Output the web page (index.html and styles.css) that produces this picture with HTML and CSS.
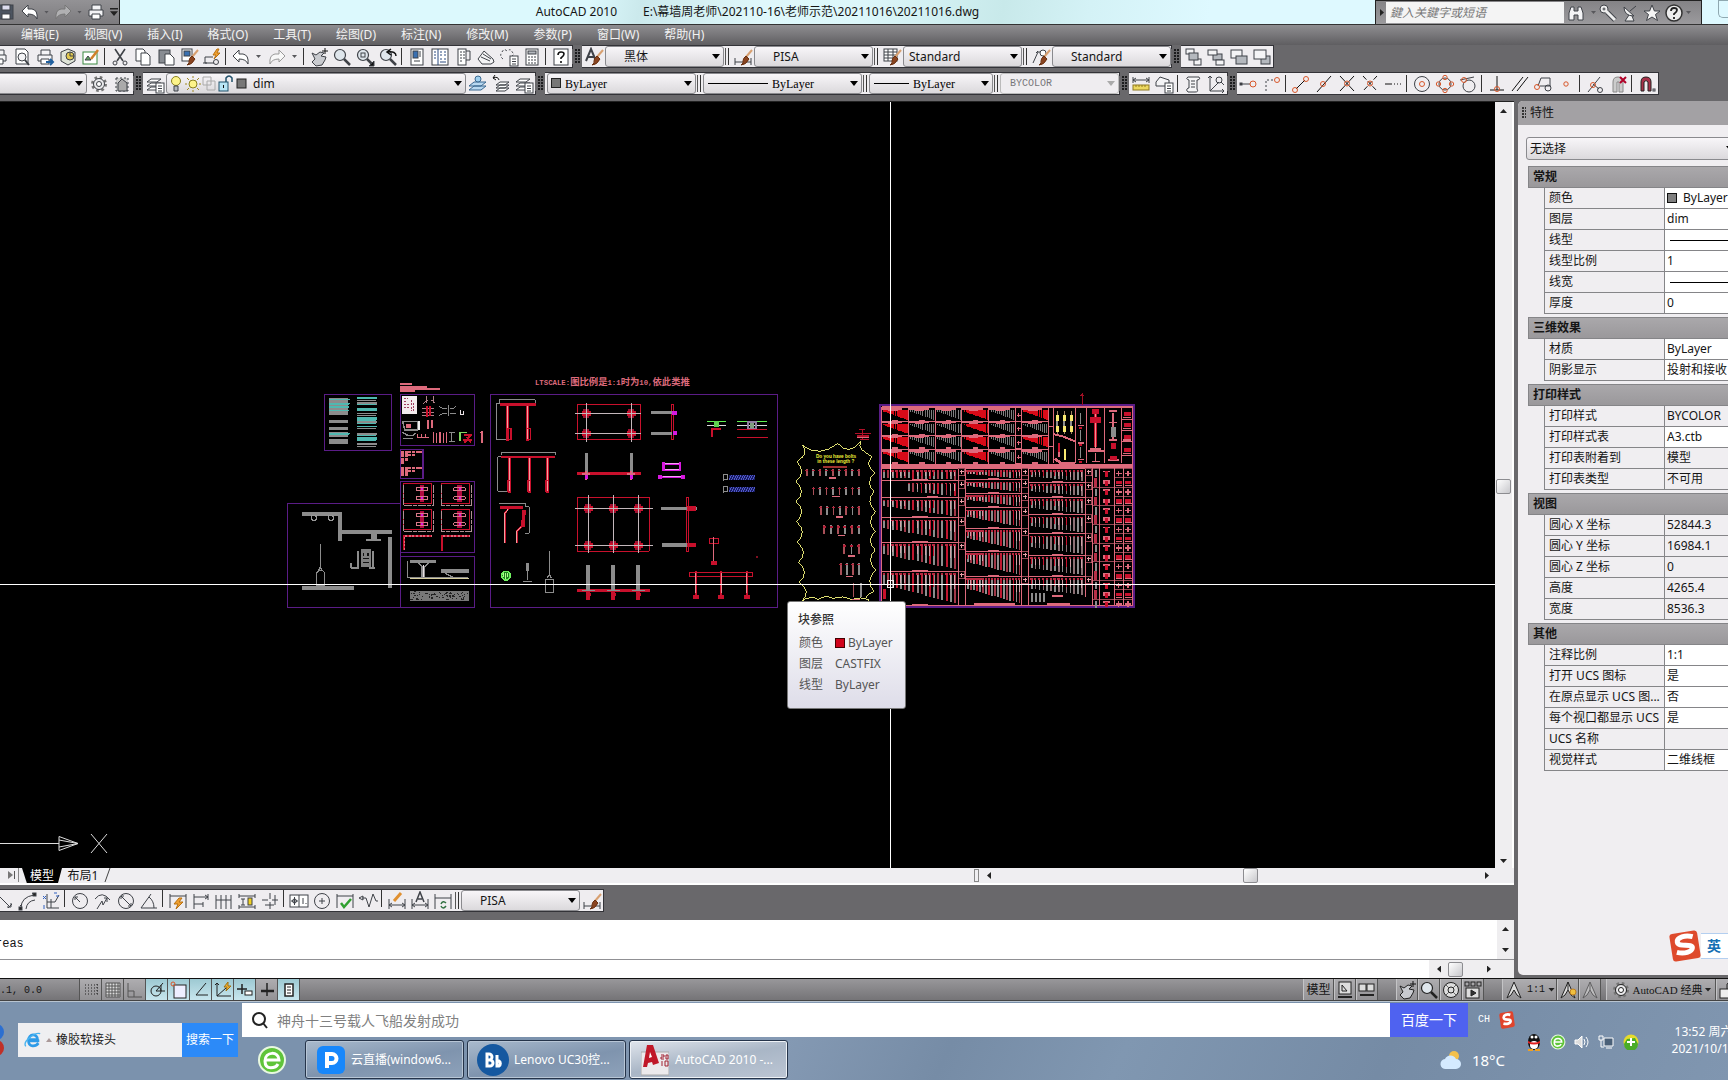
FILE: index.html
```html
<!DOCTYPE html>
<html lang="zh-CN">
<head>
<meta charset="utf-8">
<title>AutoCAD 2010</title>
<link rel="stylesheet" href="styles.css">
</head>
<body>
<header>
  <div class="titlebar">
    <div class="quick">
      <button data-icon="save" aria-label="保存"></button><button data-icon="undoW" aria-label="放弃"></button><i class="tri dim"></i><button data-icon="redoW" aria-label="重做"></button><i class="tri dim"></i><button data-icon="printW" aria-label="打印"></button><i class="tri bar-tri"></i>
    </div>
    <h1><span>AutoCAD 2010</span><span>E:\幕墙周老师\202110-16\老师示范\20211016\20211016.dwg</span></h1>
    <div class="infocenter">
      <i class="tri right"></i><input type="text" placeholder="鍵入关鍵字或短语" aria-label="搜索">
      <button class="find" data-icon="binoc" aria-label="搜索"></button><i class="tri dim"></i><button data-icon="key" aria-label="速博"></button><button data-icon="dish" aria-label="通讯中心"></button><button data-icon="star" aria-label="收藏夹"></button><button data-icon="helpW" aria-label="帮助"></button><i class="tri dim"></i>
    </div>
    <button class="winbtn" aria-label="最小化"></button>
  </div>
  <nav class="menu">
    <button>编辑(E)</button><button>视图(V)</button><button>插入(I)</button><button>格式(O)</button><button>工具(T)</button><button>绘图(D)</button><button>标注(N)</button><button>修改(M)</button><button>参数(P)</button><button>窗口(W)</button><button>帮助(H)</button>
  </nav>
  <div class="bar">
    <div class="panel bleed" data-tools="print preview publish dwf edit | cut copy paste match block | undo v redo v | pan zoom zoomwin zoomprev | props center palette sheet markup calc | help"></div>
    <i class="grip"></i>
    <div class="panel">
      <button data-icon="textstyle" aria-label="文字样式"></button><select class="w119 in16" aria-label="文字样式"><option>黑体</option></select><i class="sep two"></i>
      <button data-icon="dimstyle" aria-label="标注样式"></button><select class="w119 in16" aria-label="标注样式"><option>PISA</option></select><i class="sep two"></i>
      <button data-icon="tablestyle" aria-label="表格样式"></button><select class="w119" aria-label="表格样式"><option>Standard</option></select><i class="sep two"></i>
      <button data-icon="leader" aria-label="多重引线样式"></button><select class="w119 in16" aria-label="多重引线样式"><option>Standard</option></select>
    </div>
    <i class="grip"></i>
    <div class="panel" data-tools="order1 order2 order3 order4"></div>
  </div>
  <div class="bar">
    <div class="panel bleedfar"><select class="w171" aria-label="工作空间"><option>AutoCAD 经典</option></select><button data-icon="gear" aria-label="工作空间设置"></button><button data-icon="wsSave" aria-label="我的工作空间"></button></div>
    <i class="grip"></i>
    <div class="panel"><button data-icon="layers" aria-label="图层特性"></button>
      <div class="combo"><select class="w300 in84" aria-label="图层"><option>dim</option></select><span class="over" data-tools="bulb sun vp lock swatch"></span></div>
      <span class="group" data-tools="laycur layprev laystate"></span></div>
    <i class="grip"></i>
    <div class="panel pad serif">
      <div class="combo"><select class="w149 in16" aria-label="颜色"><option>ByLayer</option></select><span class="chip"></span></div><i class="sep two"></i>
      <div class="combo"><select class="w159 in68" aria-label="线型"><option>ByLayer</option></select><span class="rule w60"></span></div><i class="sep two"></i>
      <div class="combo"><select class="w124 in40" aria-label="线宽"><option>ByLayer</option></select><span class="rule w32"></span></div><i class="sep two"></i>
      <select class="w119 mono" aria-label="打印样式" disabled><option>BYCOLOR</option></select>
    </div>
    <i class="grip"></i>
    <div class="panel" data-tools="dist area | list locate"></div>
    <i class="grip"></i>
    <div class="panel" data-tools="otrack ofrom | oend omid oint oapp oext | ocen oqua otan | operp opar oins onode | onear onone | oset"></div>
  </div>
</header>
<main>
  <section class="work">
    <div class="view">
      <div class="canvas">
        <svg id="drawing" role="img" aria-label="图纸"></svg>
        <div class="tip">
          <strong>块参照</strong>
          <dl><dt>颜色</dt><dd><i></i>ByLayer</dd><dt>图层</dt><dd>CASTFIX</dd><dt>线型</dt><dd>ByLayer</dd></dl>
        </div>
      </div>
      <div class="vscroll"><i class="tri up"></i><i class="thumb"></i><i class="tri"></i></div>
    </div>
    <div class="tabs">
      <button class="last" aria-label="最后一个布局"><svg width="12" height="12"><path d="M3 2l5 4-5 4z" fill="#777"/><path d="M9.500 2v8" stroke="#555"/></svg></button>
      <button class="tab on">模型</button><button class="tab">布局1</button>
      <svg class="slash" width="8" height="14"><path d="M1 14L6 0" stroke="#444"/></svg>
      <div class="hscroll"><i class="split"></i><i class="tri left"></i><i class="thumb"></i><i class="tri right"></i></div>
    </div>
    <div class="dimrow">
      <div class="panel">
        <span class="group first" data-tools="daligned darc dord | drad djog ddia dang | dquick dbase dcont dspace dbreak | dtol dcenter dinsp djogl | dedit dtedit dupd"></span><i class="sep two"></i><select class="w119 in16" aria-label="标注样式控制"><option>PISA</option></select><button data-icon="dimstyle" aria-label="标注样式"></button>
      </div>
    </div>
    <div class="command">
      <div class="log"><p>reas</p><div class="mini"><i class="tri up"></i><i class="tri"></i></div></div>
      <div class="prompt"><input type="text" aria-label="命令"><div class="minih"><i class="tri left"></i><i class="thumb"></i><i class="tri right"></i></div></div>
    </div>
  </section>
  <aside class="props">
    <h2 class="ptitle"><i></i>特性</h2>
    <select class="pick" aria-label="对象"><option>无选择</option></select>
    <h3>常规</h3>
    <table><tr><th>颜色</th><td><i class="sq"></i>ByLayer</td></tr><tr><th>图层</th><td>dim</td></tr><tr><th>线型</th><td><i class="ln"></i></td></tr><tr><th>线型比例</th><td>1</td></tr><tr><th>线宽</th><td><i class="ln"></i></td></tr><tr><th>厚度</th><td>0</td></tr></table>
    <h3>三维效果</h3>
    <table><tr><th>材质</th><td>ByLayer</td></tr><tr><th>阴影显示</th><td>投射和接收</td></tr></table>
    <h3>打印样式</h3>
    <table><tr><th>打印样式</th><td class="ro">BYCOLOR</td></tr><tr><th>打印样式表</th><td>A3.ctb</td></tr><tr><th>打印表附着到</th><td class="ro">模型</td></tr><tr><th>打印表类型</th><td class="ro">不可用</td></tr></table>
    <h3>视图</h3>
    <table class="ro"><tr><th>圆心 X 坐标</th><td>52844.3</td></tr><tr><th>圆心 Y 坐标</th><td>16984.1</td></tr><tr><th>圆心 Z 坐标</th><td>0</td></tr><tr><th>高度</th><td>4265.4</td></tr><tr><th>宽度</th><td>8536.3</td></tr></table>
    <h3>其他</h3>
    <table><tr><th>注释比例</th><td>1:1</td></tr><tr><th>打开 UCS 图标</th><td>是</td></tr><tr><th>在原点显示 UCS 图...</th><td>否</td></tr><tr><th>每个视口都显示 UCS</th><td>是</td></tr><tr><th>UCS 名称</th><td class="ro"></td></tr><tr><th>视觉样式</th><td>二维线框</td></tr></table>
    <div class="ime"><svg width="32" height="32" viewBox="0 0 32 32"><g transform="rotate(-9 16 16)"><rect x="2" y="2" width="28" height="28" rx="3" fill="#de4a2c"/><path d="M25 8C18 5 9 6 9 11c0 6 15 3 14 8-1 4-9 5-16 2" fill="none" stroke="#fff" stroke-width="5"/></g></svg><b>英</b></div>
  </aside>
</main>
<div class="status">
  <output>.1, 0.0</output>
  <div class="toggles">
    <button data-icon="ssnap" aria-label="捕捉"></button><button data-icon="sgrid" aria-label="栅格"></button><button data-icon="sortho" aria-label="正交"></button><button class="on" data-icon="spolar" aria-label="极轴"></button><button class="on" data-icon="sosnap" aria-label="对象捕捉"></button><button class="on" data-icon="sotrack" aria-label="对象追踪"></button><button class="on" data-icon="sducs" aria-label="DUCS"></button><button class="on" data-icon="sdyn" aria-label="DYN"></button><button data-icon="slwt" aria-label="线宽"></button><button class="on" data-icon="sqp" aria-label="快捷特性"></button>
  </div>
  <div class="viewtools">
    <div class="seg"><button class="txt">模型</button><button data-icon="slayout" aria-label="布局"></button><button data-icon="squick" aria-label="快速查看"></button></div>
    <div class="seg"><button data-icon="pan" aria-label="平移"></button><button data-icon="zoom" aria-label="缩放"></button><button data-icon="swheel" aria-label="控制盘"></button><button data-icon="smotion" aria-label="运动"></button></div>
    <div class="seg"><button class="scale"><svg class="ico" viewBox="0 0 20 20"><path d="M10 2L3 18l4-3 3-5 3 5 4 3z" fill="#ddd"/></svg>1:1<i class="tri"></i></button><button data-icon="sannov" aria-label="注释可见性"></button><button data-icon="sannoa" aria-label="自动添加"></button></div>
    <div class="seg tight"><button class="ws"><span class="wsicon"></span>AutoCAD 经典<i class="tri"></i></button><button data-icon="slock" aria-label="锁定"></button></div>
  </div>
</div>
<footer class="taskbar">
  <div class="lefttask">
    <svg class="chrome" width="10" height="34"><circle cx="-4" cy="9" r="8" fill="#2c6fd0"/><circle cx="-4" cy="25" r="8" fill="#c03028"/></svg>
    <form class="ie">
      <svg width="18" height="18" viewBox="0 0 20 20"><path d="M17 11H5M5 9.500h10c0-7-10-7-10 1s8 7 11 3" fill="none" stroke="#2e9be8" stroke-width="3"/><path d="M2 17C-2 12 12 1 18 3" fill="none" stroke="#48b4f0" stroke-width="1.500"/></svg>
      <i class="tri up"></i><input type="text" value="橡胶软接头" aria-label="网页搜索"><button type="button">搜索一下</button>
    </form>
  </div>
  <div class="midtask">
    <div class="searchrow">
      <form class="baidu"><svg width="18" height="18" viewBox="0 0 18 18"><circle cx="8" cy="8" r="6" fill="none" stroke="#222" stroke-width="2"/><path d="M12 12l4 5" stroke="#222" stroke-width="2"/></svg><input type="text" placeholder="神舟十三号载人飞船发射成功" aria-label="百度搜索"><button type="button">百度一下</button></form>
      <span class="lang">CH</span><svg width="16" height="18" viewBox="0 0 32 32" preserveAspectRatio="none"><g transform="rotate(-9 16 16)"><rect x="2" y="2" width="28" height="28" rx="4" fill="#e0442c"/><path d="M24 8C18 5 10 6 10 11c0 6 14 3 13 8-1 4-9 5-15 2" fill="none" stroke="#fff" stroke-width="5"/></g></svg>
    </div>
    <div class="tasks">
      <button class="round" aria-label="360浏览器"><svg width="30" height="30" viewBox="0 0 30 30"><circle cx="15" cy="15" r="13" fill="#5fc43a" stroke="#e8f8e0" stroke-width="2"/><path d="M8 15h14c0-9-14-9-14 1s11 7 13 3" fill="none" stroke="#fff" stroke-width="3"/></svg></button>
      <button class="task"><svg width="28" height="28" viewBox="0 0 28 28"><rect width="28" height="28" rx="6" fill="#1787fb"/><path d="M10 22V8h5a4 4 0 0 1 0 9h-5" fill="none" stroke="#fff" stroke-width="4"/></svg><span>云直播(window6...</span></button>
      <button class="task"><svg width="32" height="32" viewBox="0 0 32 32"><circle cx="16" cy="16" r="16" fill="#1558a0"/><g fill="none" stroke="#fff" stroke-width="3"><path d="M10 10v12h3a3 3 0 0 0 0-6h-3 2a3 3 0 0 0 0-6z"/><path d="M20 11v11h2a3 3 0 0 0 0-5h-2"/></g></svg><span>Lenovo UC30控...</span></button>
      <button class="task active"><svg width="28" height="32" viewBox="0 0 28 32"><path d="M0 8h28v23H0z" fill="#eceaec" stroke="#aaa"/><path d="M6 1h6l6 18-6 2-1-3-4 1-1 4H2z" fill="#c01828"/><path d="M8 14l1-6 2 5z" fill="#fff"/><path d="M20 11h3v2h-3v2h3M25 11h2v4h-2zM21 17v5M24 17h3v5h-3z" fill="none" stroke="#a02030"/></svg><span>AutoCAD 2010 -...</span></button>
      <div class="weather"><svg width="22" height="20" viewBox="0 0 22 20"><circle cx="14" cy="6" r="5" fill="#f4c04c"/><path d="M6 19a5 5 0 0 1-1-10 6 6 0 0 1 11 0 5 5 0 0 1 0 10z" fill="#d4eaff"/></svg><span>18°C</span></div>
    </div>
  </div>
  <div class="tray">
    <svg width="16" height="18" viewBox="0 0 16 18"><ellipse cx="8" cy="9" rx="6" ry="8" fill="#111"/><ellipse cx="8" cy="12" rx="4" ry="4" fill="#fff"/><path d="M2 8q6 3 12 0v2q-6 3-12 0z" fill="#e02020"/><circle cx="6" cy="4" r="1.500" fill="#fff"/><circle cx="10" cy="4" r="1.500" fill="#fff"/><path d="M2 17h5M9 17h5" stroke="#f0a020" stroke-width="2"/></svg>
    <svg width="16" height="16" viewBox="0 0 30 30"><circle cx="15" cy="15" r="13" fill="#5fc43a" stroke="#e8f8e0" stroke-width="2"/><path d="M9 15h13c0-9-14-9-14 1s11 7 13 3" fill="none" stroke="#fff" stroke-width="3"/></svg>
    <svg width="16" height="16" viewBox="0 0 16 16" fill="none" stroke="#fff"><path d="M1 6h3l4-4v12l-4-4H1z" fill="#ddd"/><path d="M10 5q2 3 0 6M12 3q4 5 0 10"/></svg>
    <svg width="16" height="16" viewBox="0 0 16 16" fill="none" stroke="#fff"><path d="M6 4h9v8H6z" fill="#4a6078"/><path d="M8 14h6M1 2h4v4H1zM3 6v7h3"/></svg>
    <svg width="18" height="16" viewBox="0 0 18 16"><circle cx="9" cy="8" r="7.500" fill="#e6dc2c"/><path d="M2 10a7 7 0 0 0 14 0l-3-6-8 1z" fill="#4aac28"/><path d="M9 4v8M5 8h8" stroke="#fff" stroke-width="2"/></svg>
  </div>
  <div class="clock"><time>13:52 周六</time><time>2021/10/16</time></div>
</footer>
<script src="app.js"></script>
</body>
</html>
```
FILE: styles.css
```css
* { box-sizing: border-box; }
html, body { height: 100%; }
body { margin: 0; display: flex; flex-direction: column; overflow: hidden; background: #69686b; font: 12px/16px "Noto Sans", "Noto Sans CJK SC", sans-serif; color: #151515; }
button, input, select { font: inherit; color: inherit; margin: 0; padding: 0; border: 0; background: none; border-radius: 0; }
button { display: flex; align-items: center; justify-content: center; white-space: nowrap; }
input { min-width: 0; }
h1, h2, h3, p, dl, dd { margin: 0; font-size: 12px; font-weight: 400; }
svg { display: block; flex: none; }
.ico { width: 20px; height: 20px; fill: none; stroke: #3f4248; }

/* small arrows */
.tri { flex: none; width: 7px; height: 4px; background: #222; clip-path: polygon(0 0, 100% 0, 50% 100%); }
.tri.up { clip-path: polygon(50% 0, 100% 100%, 0 100%); }
.tri.right { width: 4px; height: 7px; clip-path: polygon(0 0, 100% 50%, 0 100%); }
.tri.left { width: 4px; height: 7px; clip-path: polygon(100% 0, 100% 100%, 0 50%); }
.tri.dim { width: 5px; height: 3px; background: #58585c; }
.tri.bar-tri { height: 8px; width: 8px; clip-path: polygon(0 0, 100% 0, 100% 20%, 0 20%, 0 40%, 100% 40%, 50% 100%, 0 40%); }
.thumb { flex: none; width: 15px; height: 15px; border: 1px solid #8c8c90; border-radius: 2px; background: linear-gradient(135deg, #fff, #c8c8cc); }

/* title */
.titlebar { display: flex; align-items: stretch; height: 25px; border-bottom: 1px solid #333; background: linear-gradient(100deg, #dcf9fd 0 34%, #cbe9ec 37%, #dff8fb 44%, #dcf7fa 50%, #c8e9ea 58%, #d4f2f6 63%, #def9ff 70%); }
.quick { display: flex; align-items: center; gap: 4px; width: 120px; background: linear-gradient(#939295, #7c7b7e); border-right: 1px solid #222; }
.quick button:first-child { margin-left: -4px; }
.titlebar h1 { flex: 1; display: flex; justify-content: center; gap: 26px; align-items: center; padding-left: 20px; white-space: pre; }
.infocenter { display: flex; align-items: center; gap: 2px; width: 327px; padding: 0 4px; background: linear-gradient(#848386, #9b9a9d); border: 1px solid #222; border-width: 1px 1px 0; }
.infocenter input { width: 178px; height: 21px; background: #f4f4f4; padding-left: 4px; font-style: italic; flex: none; }
.infocenter input::placeholder { color: #777; }
.find { margin-right: 3px; }
.winbtn { width: 10px; height: 18px; margin-left: 16px; border: 1px solid #8fa8b0; border-right: 0; border-radius: 0 0 0 5px; }

.menu { display: flex; gap: 25px; height: 20px; padding-left: 21px; background: linear-gradient(#8f8e91, #5f5e61); color: #f2f2f2; }

/* toolbars */
.bar { display: flex; height: 23px; margin-bottom: 4px; }
.bar:last-child { margin-bottom: 6px; }
.panel { display: flex; align-items: center; height: 23px; background: #efedf0; box-shadow: inset 0 1px #333338, inset 0 -1px #333338, 1px 0 #333338; }
.panel button, .group button { width: 23px; height: 21px; }
.panel .ar { width: 13px; }
.group { display: flex; }
.pad { padding-left: 2px; }
.bleed { margin-left: -13px; }
.bleedfar { margin-left: -84px; }
.grip { width: 10px; flex: none; margin: 4px 0; background: radial-gradient(circle at 1px 1px, #1c1c1e 1px, transparent 1px) 0 0 / 3px 3px; border: solid #69686b; border-width: 0 2px 0 3px; }
.sep { flex: none; width: 6px; height: 17px; background: linear-gradient(#333, #333) 2px 0 / 1px 100% no-repeat; }
.sep.two { width: 7px; background: linear-gradient(#555, #555) 1px 0 / 1px 100% no-repeat, linear-gradient(#333, #333) 4px 0 / 1px 100% no-repeat; }
select { appearance: none; height: 21px; line-height: 16px; padding: 0 16px 0 5px; border: 1px solid #8a8a8e; border-radius: 3px; color: #151515; background: url("data:image/svg+xml,%3Csvg xmlns='http://www.w3.org/2000/svg' width='8' height='5'%3E%3Cpath d='M0 0h8L4 5z'/%3E%3C/svg%3E") right 3px center no-repeat, linear-gradient(#f8f6f9, #dbd9dc); }
select:disabled { opacity: 1; color: #77777a; background: url("data:image/svg+xml,%3Csvg xmlns='http://www.w3.org/2000/svg' width='8' height='5'%3E%3Cpath fill='%23aaa' d='M0 0h8L4 5z'/%3E%3C/svg%3E") right 3px center no-repeat, #efedf0; border-color: #bbb; }
.w119 { width: 119px; } .w124 { width: 124px; } .w149 { width: 149px; } .w159 { width: 159px; } .w171 { width: 171px; } .w300 { width: 300px; }
.in16 { padding-left: 18px; } .in68 { padding-left: 68px; } .in84 { padding-left: 86px; }
.serif .in40 { padding-left: 43px; }
.serif select { font-family: "Liberation Serif", serif; font-size: 12px; color: #000; }
.serif .in16 { padding-left: 17px; }
.serif select.mono { font-family: "Liberation Mono", monospace; font-size: 10px; padding-left: 9px; color: #77777a; }
.combo { position: relative; display: flex; }
.over { position: absolute; left: 3px; top: 0; display: flex; pointer-events: none; }
.over button { width: 16px; height: 21px; }
.chip { position: absolute; left: 4px; top: 5px; width: 10px; height: 10px; background: #777; border: 1px solid #222; }
.rule { position: absolute; left: 5px; top: 10px; height: 1px; background: #000; }
.w60 { width: 60px; } .w32 { width: 35px; }

/* work area */
main { flex: 1; min-height: 0; display: flex; }
.work { flex: 1; min-width: 0; display: flex; flex-direction: column; }
.view { flex: 1; min-height: 0; display: flex; border-top: 1px solid #222; }
.canvas { flex: 1; position: relative; background: #000; overflow: hidden; }
#drawing { width: 100%; height: 100%; }
.vscroll { width: 19px; background: #efeef0; border-right: 2px solid #fff; display: flex; flex-direction: column; align-items: center; justify-content: space-between; padding: 7px 0 5px; }
.tip { position: absolute; left: 787px; top: 499px; width: 119px; height: 108px; border: 1px solid #777; border-radius: 3px; background: linear-gradient(#fff, #dedde9); color: #555; padding: 10px; }
.tip strong { font-weight: 500; color: #333; }
.tip dl { display: grid; grid-template-columns: 36px 1fr; row-gap: 5px; margin: 7px 0 0 1px; }
.tip dd { display: flex; align-items: center; }
.tip i { width: 10px; height: 10px; margin-right: 3px; background: #d0021b; border: 1px solid #400; }
.tabs { display: flex; height: 17px; background: #efeef1; border-bottom: 2px solid #fff; }
.tabs .last { width: 15px; height: 14px; margin: 0 3px 0 4px; border-right: 1px solid #888; }
.tab { height: 15px; width: 40px; }
.tab.on { background: #000; color: #fff; clip-path: polygon(0 0, 100% 0, 90% 100%, 12% 100%); }
.tab + .tab { width: 42px; }
.slash { margin: 0 auto 0 0; }
.hscroll { display: flex; align-items: center; width: 540px; padding-right: 25px; }
.split { width: 5px; height: 13px; border: 1px solid #888; }
.hscroll .left { margin: 0 auto 0 8px; }
.hscroll .thumb { margin-right: 227px; }
.dimrow { height: 35px; padding-top: 4px; display: flex; }
.first { margin-left: -7px; }
.command { height: 58px; display: flex; flex-direction: column; background: #fff; }
.log { flex: 1; display: flex; justify-content: space-between; border-bottom: 1px solid #909094; }
.log p { font: 12px/16px "Liberation Mono", monospace; margin: 16px 0 0 -5px; }
.mini { width: 17px; background: #efeef0; display: flex; flex-direction: column; justify-content: space-between; align-items: center; padding: 7px 0; }
.prompt { height: 18px; display: flex; }
.prompt input { flex: 1; outline: 0; }
.minih { width: 85px; background: #efeef0; display: flex; align-items: center; gap: 7px; padding-left: 8px; }
.minih .right { margin-left: 17px; }

/* properties */
.props { flex: none; width: 210px; margin: 0 0 3px 4px; background: #f0eef1; border-radius: 5px 0 0 5px; overflow: hidden; display: flex; flex-direction: column; }
.ptitle { flex: none; height: 24px; display: flex; align-items: center; background: #a3a1a4; padding-left: 4px; gap: 4px; }
.ptitle i { width: 4px; height: 12px; background: radial-gradient(circle at 1px 1px, #333 1px, transparent 1px) 0 0 / 3px 3px; }
.pick { flex: none; height: 23px; margin: 12px -10px 6px 8px; padding-left: 3px; }
.props h3 { flex: none; height: 22px; line-height: 20px; margin-left: 10px; padding-left: 4px; background: linear-gradient(#aaa8ab, #9a989b); border: 1px solid #858588; border-right: 0; font-weight: 700; }
.props table { flex: none; margin: 0 0 3px 26px; width: 184px; table-layout: fixed; border-collapse: separate; border-spacing: 0; border-left: 1px solid #858588; }
.props th, .props td { height: 21px; padding: 0 0 0 4px; border-bottom: 1px solid #858588; white-space: nowrap; overflow: hidden; font-weight: 400; text-align: left; line-height: 18px; }
.props th { width: 120px; border-right: 1px solid #858588; }
.props td { background: #fff; padding-left: 2px; }
.props td.ro, .props .ro td { background: #f0eef1; }
.sq { display: inline-block; width: 10px; height: 10px; margin-right: 6px; background: #808080; border: 1px solid #111; vertical-align: -1px; }
.ln { display: block; height: 1px; margin-left: 3px; background: #000; }
.ime { display: flex; align-items: center; margin: auto 0 13px 151px; }
.ime b { height: 26px; flex: 1; line-height: 24px; padding-left: 6px; font-size: 14px; color: #1670b4; background: #fff; border: 1px solid #b4cff0; border-width: 1px 0; white-space: nowrap; }

/* status bar */
.status { flex: none; height: 23px; display: flex; border-top: 1px solid #111; border-bottom: 1px solid #444; background: linear-gradient(#98979a, #757477); }
.status output { width: 79px; font: 10px/24px "Liberation Mono", monospace; }
.status button { min-width: 22px; height: 21px; border-right: 1px solid #555; background: linear-gradient(#aeadb0, #939295); }
.status .toggles button { width: 22px; }
.status button.on { background: linear-gradient(#9dc9d2, #c8e6ee); }
.status .ico { stroke: #222; }
.toggles { display: flex; border-left: 1px solid #555; }
.viewtools { flex: 1; display: flex; justify-content: flex-end; gap: 18px; margin-right: -10px; font-family: "Liberation Serif", "Noto Sans CJK SC", serif; }
.seg { display: flex; }
.seg button { border-left: 1px solid #c4c4c6; }
.tight { margin-left: -13px; }
.status .txt { width: 31px; }
.status .scale { width: 55px; gap: 3px; font: 10px/16px "Liberation Mono", monospace; }
.status .ws { width: 110px; font-size: 11px; gap: 2px; }

/* taskbar */
.taskbar { flex: none; height: 79px; display: flex; color: #fff; background: linear-gradient(115deg, #7b92ad 0 30%, #859ab4 45%, #768ca6 55%, #8097b1 65%, #758ba5 80%, #8096b0); border-top: 1px solid #b8c4d0; }
.lefttask { width: 242px; display: flex; padding-top: 21px; }
.chrome { margin-right: 8px; }
.ie { display: flex; align-items: center; height: 34px; width: 220px; background: #efeff1; color: #222; gap: 4px; padding-left: 6px; }
.ie .tri { background: #a99; width: 6px; }
.ie input { flex: 1; }
.ie button { width: 56px; height: 34px; background: #2c8af8; color: #fff; }
.midtask { flex: 1; min-width: 0; display: flex; flex-direction: column; }
.searchrow { display: flex; height: 35px; align-items: center; padding-top: 1px; }
.baidu { flex: 1; height: 34px; display: flex; align-items: center; background: #fff; padding-left: 9px; gap: 8px; font-size: 14px; }
.baidu input { flex: 1; height: 34px; }
.baidu input::placeholder { color: #808080; }
.baidu button { width: 78px; height: 34px; background: #4f62f0; color: #fff; }
.lang { margin: 0 8px 0 10px; width: 13px; font: 10px/16px "Liberation Mono", monospace; }
.tasks { display: flex; align-items: center; gap: 3px; height: 43px; padding-top: 2px; }
.round { width: 60px; }
.task { width: 159px; height: 39px; justify-content: flex-start; gap: 6px; padding-left: 11px; border: 1px solid #25344a; border-radius: 3px; background: linear-gradient(170deg, #a9bacd, #7f94ae 55%, #8ea2ba); box-shadow: inset 0 0 0 1px #b8c6d6; font-size: 12px; }
.task:nth-child(3) { padding-left: 9px; gap: 5px; }
.task.active { background: linear-gradient(170deg, #e0e5ec, #a9b6c6 50%, #bcc6d4); box-shadow: inset 0 0 0 1px #eef2f6; }
.weather { margin-left: auto; display: flex; align-items: center; gap: 10px; padding-right: 10px; font-size: 15px; }
.tray { display: flex; gap: 8px; align-items: center; height: 79px; padding-left: 11px; width: 130px; }
.clock { width: 83px; padding-top: 21px; text-align: center; padding-left: 26px; white-space: nowrap; }
.clock time { display: block; line-height: 17px; margin-right: -8px; }
```
FILE: app.js
```js
// ---- icons, each on a 20 x 20 grid ----
const O = 'stroke="#d8572a"', D = 'stroke-dasharray="2 2"', W = 'fill="#f4f4f6"', G = 'fill="#b4b8be"';
const p = (d, a = '') => `<path d="${d}" ${a}/>`;
const c = (x, y, r, a = '') => `<circle cx="${x}" cy="${y}" r="${r}" ${a}/>`;
const r = (x, y, w, h, a = '') => `<rect x="${x}" y="${y}" width="${w}" height="${h}" ${a}/>`;
const brush = p('M19 3l-6 7', 'stroke="#d8a070" stroke-width="2"') + p('M13 9l3 3q-3 6-8 6 3-2 2-4 0-3 3-5z', 'fill="#8a4420" stroke="#6a3010"');
const printer = p('M6 8V3h9v5M3 8h14v6H3z', W) + p('M6 12h8v5H6z', 'fill="#fff"');
const undo = p('M2 9l6-6v4h4q6 1 5 10-2-5-9-5v3z', 'fill="#fff"');
const redo = p('M18 9l-6-6v4H8q-6 1-5 10 2-5 9-5v3z', 'fill="#f8f8f8" stroke="#999"');
const lens = c(8, 8, 5.5, 'fill="#dfe6ec" stroke-width="1.2"') + p('M12 12l6 6', 'stroke-width="2.500"');
const layers = p('M6 5h10l-4 3H2zM6 9h10l-4 3H2zM6 13h10l-4 3H2z', 'fill="#fff"');
const calc = r(11, 9, 8, 10, 'fill="#fff"') + p('M13 12h4M13 14.500h4M13 17h4');
const dim = p('M2 8v10M18 8v10M2 14h16M5 12l-3 2 3 2M15 12l3 2-3 2');
const hand = p('M3 6l4 2 4-3 4 1-3 3 5 1-1 3-3 5-6 1-4-4 3-3z', 'fill="#c9cbd0"') + p('M16 1v6M13 4h6', 'stroke="#111"');
const anno = p('M10 2L3 18l4-3 3-5 3 5 4 3z', 'fill="#ddd"') + p('M10 2v8');
const gear = c(10, 10, 6.5, 'stroke="#777" stroke-width="3" stroke-dasharray="2.500 2.600"') + c(10, 10, 5.5, 'fill="#e8e8ea"') + c(10, 10, 2.5, 'fill="#fff"');
const icons = {
  save: r(3, 3, 14, 14, 'fill="#4c5460"') + r(6, 3, 8, 5, 'fill="#dde"') + r(6, 12, 8, 5, 'fill="#fff"'), undoW: undo, redoW: p('M18 9l-6-6v4H8q-6 1-5 10 2-5 9-5v3z', 'fill="#b0b0b2" stroke="#777"'), printW: printer,
  binoc: p('M3 17v-7l2-6h3v4h4V4h3l2 6v7h-5v-5H8v5z', W), key: c(6, 6, 4, 'fill="#eee"') + p('M9 9l8 8', 'stroke-width="5"') + p('M8 8l9 9', 'stroke="#eee" stroke-width="3"') + c(6, 6, 1),
  dish: p('M4 4q0 9 10 9zM9 12l-4 6h9l-2-5M10 8l6-5', 'fill="#eee"'), star: p('M10 2l2.400 6H18l-4.500 3.500 2 6L10 14l-5.500 3.500 2-6L2 8h5.600z', 'fill="#f4f4f4"'),
  helpW: c(10, 10, 8, 'fill="#eee" stroke="#333" stroke-width="1.500"') + p('M7 8q0-3 3-3t3 2q0 2-3 4v1M10 14v2', 'stroke="#222" stroke-width="1.800"'),
  print: printer, preview: p('M4 2h9l3 3v12H4z', 'fill="#fff"') + c(10, 10, 4, W) + p('M13 13l4 5', 'stroke-width="2"'), publish: printer + p('M11 15h6M15 12l3 3-3 3', 'stroke="#2060a0" stroke-width="2"'),
  dwf: p('M3 5l7-3 7 3v9l-7 4-7-4z', 'fill="#dfe4d8"') + c(12, 9, 4, 'fill="#e0c850"') + p('M12 5v4h4'), edit: r(2, 5, 14, 12, 'fill="#fff" stroke="#3a8a40"') + p('M4 13l3-4 3 4z', 'fill="#60a860"') + p('M17 3l-7 9', 'stroke="#d0802a" stroke-width="2.500"'),
  cut: p('M5 2l8 12M15 2L7 14', 'stroke-width="1.600"') + c(5, 16, 2) + c(15, 16, 2), copy: p('M3 2h7l2 2v10H3z', 'fill="#fff"') + p('M8 6h6l3 3v9H8z', 'fill="#fff"'), paste: r(3, 3, 11, 13, 'fill="#888c92"') + p('M9 7h5l4 4v7H9z', 'fill="#fff"'),
  match: r(3, 2, 10, 12, 'fill="#fff"') + r(5, 4, 6, 5, 'fill="#3a70b0"') + brush, block: p('M3 10v6h9M3 10h8M1 16h4') + c(14, 15, 2.5) + p('M15 2l-4 6h3l-2 4 6-6h-3l2-4z', 'fill="#f0a030" stroke="#b87010"'),
  undo, redo, pan: hand, zoom: lens, zoomwin: lens + r(6, 6, 4, 4) + p('M19 14v5h-5z', 'fill="#111"'), zoomprev: lens + p('M18 9q0-5-8-4M13 2l-4 3 4 3', 'stroke="#111" stroke-width="1.500"'),
  props: r(4, 2, 12, 16, 'fill="#fff"') + r(6, 4, 5, 7, 'fill="#3a70b0"') + p('M7 14h6M13 4v6'), center: r(2, 2, 16, 16, 'fill="#fff"') + p('M8 2v16M4 5h2M4 8h2M4 11h2M10 5h2M14 5h2M10 8h2M14 8h2M10 12h2M14 12h2M10 15h6', 'stroke="#2a4a80"'),
  palette: r(5, 2, 8, 16, 'fill="#fff"') + p('M13 4h4v9h-4M7 5h2M10 5h2M7 8h2M10 8h2M7 11h2M10 11h2M7 14h2'), sheet: p('M2 12l6-8 9 8 1 3-3 2H6z', W) + p('M5 10l9 4M7 7l8 5'),
  markup: p('M3 5q2-4 5-1 4-3 5 1 3 2 0 4M4 12q-4-3-1-7', D) + calc, calc: r(4, 2, 12, 16, 'fill="#fff"') + r(6, 4, 8, 3, G) + p('M6 10h2M9 10h2M12 10h2M6 13h2M9 13h2M12 13h2M6 16h2M9 16h2M12 16h2'),
  help: r(3, 2, 14, 16, 'fill="#fff"') + p('M7 8q0-3 3-3t3 2q0 2-3 4v1M10 14v2', 'stroke="#111" stroke-width="1.600"'),
  textstyle: p('M2 14L7 2l5 12M4 10h6', 'stroke-width="2"') + brush, dimstyle: p('M2 11v7M18 11v7M2 15h16') + brush, tablestyle: r(2, 2, 13, 12, 'fill="#fff"') + p('M2 5h13M2 8h13M2 11h13M6 2v12M11 2v12') + brush, leader: p('M2 16L7 5h4M5 6L7 4') + c(12, 6, 3, 'fill="#fff"') + brush,
  order1: r(3, 2, 8, 5, W) + r(11, 12, 7, 6, W) + r(6, 6, 9, 7, G), order2: r(7, 7, 9, 6, G) + r(2, 3, 9, 5, W) + r(10, 13, 8, 5, W), order3: r(2, 3, 11, 8, W) + r(7, 9, 11, 8, G), order4: r(9, 9, 9, 8, G) + r(2, 3, 12, 9, W),
  gear, wsSave: r(4, 4, 12, 13, D + ' fill="#ccc"') + p('M6 17V9l4-4 5 4v8z', 'fill="#aaa"'), layers: layers + calc,
  bulb: c(9, 7, 4.5, 'fill="#fdf48a" stroke="#8a8020"') + p('M7 12h4v5H7z', G), sun: c(10, 10, 4, 'fill="#fdf48a" stroke="#8a8020"') + p('M10 2v2M10 16v2M2 10h2M16 10h2M4 4l2 2M14 14l2 2M16 4l-2 2M6 14l-2 2', 'stroke="#a08820"'),
  vp: p('M4 3h8v8H4zM8 7h8v9H8z', 'stroke="#aaa"'), lock: r(4, 8, 9, 9, 'fill="#b8e4f4" stroke="#20506a"') + p('M11 8V4q3-4 6 0v4', 'stroke="#20506a" stroke-width="1.500"') + p('M8.500 11v3', 'stroke="#111"'), swatch: r(6, 5, 9, 9, 'fill="#777" stroke="#222"'),
  laycur: p('M6 8h12l-5 4H1zM6 12h12l-5 4H1z', 'fill="#b8d8f0" stroke="#3a6890"') + c(10, 5, 3, 'fill="#9fd0f0" stroke="#3a6890"'), layprev: p('M9 8h9l-4 3H5zM9 11h9l-4 3H5zM9 14h9l-4 3H5z', 'fill="#fff"') + p('M8 6Q7 2 2 4l2-3M2 4l3 2', 'stroke="#111"'), laystate: layers + calc,
  dist: p('M2 3v6M18 3v6M2 6h16M5 4L2 6l3 2M15 4l3 2-3 2') + r(2, 11, 16, 5, 'fill="#ecd860" stroke="#907a20"') + p('M5 11v2M8 11v2M11 11v2M14 11v2', 'stroke="#907a20"'), area: p('M2 8l4-5 9 3v6H2z', 'fill="#f4f4f6"') + calc, list: p('M5 3h11q2 2-1 3h-1v9q2 3-2 3H5q-3-2 0-4h1V6q-4-1-1-3z', W) + p('M8 7h4M8 10h4M8 13h4'), locate: p('M4 2v15h14M4 17l9-9M2 4l2-2 2 2M16 15l2 2-2 2') + c(13, 6, 3) + p('M15 8l3 3'),
  otrack: p('M2 10h9') + r(1, 9, 2, 2, 'fill="#333"') + c(14, 10, 3, O), ofrom: p('M4 17V6h9', D) + c(15, 6, 2.5, O), oend: p('M5 15L14 6', 'stroke="#111"') + c(4, 16, 2.5, O) + c(15, 5, 2.5, O), omid: p('M3 18L17 2', 'stroke="#111"') + c(9, 10, 2.5, O),
  oint: p('M3 2l14 15M17 2L3 17', 'stroke="#111"') + c(10, 9.5, 2.5, O), oapp: p('M3 2l14 15M17 2L3 17', 'stroke="#111" stroke-dasharray="5 2"') + c(10, 9.5, 2.5, O), oext: p('M2 10h7M11 10h1M14 10h1M17 10h1', 'stroke="#111"'),
  ocen: c(10, 10, 7.5) + c(10, 10, 2.5, O), oqua: c(10, 10, 6) + c(10, 3.5, 2.2, O) + c(10, 16.5, 2.2, O) + c(3.5, 10, 2.2, O) + c(16.5, 10, 2.2, O), otan: c(11, 12, 6) + p('M2 6l14-3') + c(6, 6, 2.5, O),
  operp: p('M10 2v14M3 16h14', 'stroke="#111"') + c(10, 15, 2.5, O), opar: p('M2 17L13 3M7 17L18 3', 'stroke="#111"'), oins: p('M5 12l3-8h9v8H7') + c(4, 13, 2.5, O) + c(15, 14, 3), onode: c(10, 10, 2.2, O), onear: p('M3 18L15 3M8 10l6 5') + c(8, 11, 2.5, O) + c(15, 16, 2.5), onone: p('M5 18V8q0-5 5-5t5 5v10h-4V8H9v10z', 'fill="#ccc" stroke="#888"') + p('M12 3l6 6M18 3l-6 6', 'stroke="#b00028" stroke-width="2"'), oset: p('M4 17V8q0-5 5-5t5 5v9h-3V8q-2-3-4 0v9z', 'fill="#a83048" stroke="#222"') + r(16, 15, 2, 2),
  daligned: p('M3 4l12 12M12 16h4v-4M5 2L2 5M17 13l-4 4'), darc: p('M3 17Q3 6 16 4M8 18q1-8 9-9M4 13l-2 2M14 2l3 2') + r(1, 16, 3, 3, 'fill="#222"') + r(15, 2, 3, 3, 'fill="#222"'), dord: p('M6 3v14h12M10 8v9M6 11h8l4-7') + p('M2 5l3 3M5 5L2 8M13 2h3M15 5h3M3 14v4', 'stroke="#3060c0"'),
  drad: c(10, 10, 7.5) + p('M10 11L5 6M5 9V6h3'), djog: p('M2 8Q9-1 17 9M4 18L9 10l1 4 4-7M14 11V7h-3'), ddia: c(10, 10, 7.5) + p('M5 5l10 10M5 8V5h3M15 12v3h-3'), dang: p('M2 17L12 3M2 17h16M10 6q5 4 5 11'),
  dquick: p('M2 3v14M18 3v14M2 5h16') + p('M11 7l-5 6h4l-2 5 7-7h-4l3-4z', 'fill="#f0a030" stroke="#b87010"'), dbase: p('M3 3v15M3 6h14M3 13h9M14 4l3 2-3 2M12 11v5M17 3v6'), dcont: p('M2 4v14M7 4v14M12 4v14M17 4v14M2 9h15'), dspace: p('M2 3v4M18 3v4M2 5h16M2 14v4M18 14v4M2 16h16') + r(11, 7, 4, 7, 'fill="#f0d020"') + p('M4 8h4M6 8v6M4 14h4'), dbreak: p('M10 2v6M10 11v7M2 9h6M12 9h6M15 4v10M5 14h9'),
  dtol: r(1, 4, 18, 12, 'fill="#fff"') + p('M10 4v12M2 10h7M5.500 6v8M14 7v6M17 12v1') + c(5.5, 10, 2), dcenter: c(10, 10, 7.5) + p('M10 7v6M7 10h6'), dinsp: p('M2 3v14M18 3v14M2 5h16') + p('M6 12l3 4 7-8', 'stroke="#30a030" stroke-width="2.500"'), djogl: p('M1 7l4-2v4zM4 7h4l3 9 4-13 3 7h2'),
  dedit: dim + p('M14 2l-7 8', 'stroke="#e09030" stroke-width="3"'), dtedit: dim + p('M6 11l4-10 4 10M8 8h4', 'stroke-width="1.500"'), dupd: p('M2 3v15M18 3v15M2 7h16') + p('M8 13q2-4 5-1M13 15q-3 4-5 0', 'stroke="#307040" stroke-width="1.500"'),
  ssnap: p('M4 5h13M4 8h13M4 11h13M4 14h13M16 4v12', 'stroke-dasharray="1 2"'), sgrid: p('M3 3h14v14H3zM6 3v14M9 3v14M12 3v14M15 3v14M3 6h14M3 9h14M3 12h14M3 15h14', 'fill="#ddd" stroke="#555"'), sortho: p('M3 3v14h14M3 11h6v6', 'stroke="#555"'), spolar: c(9, 11, 5) + p('M9 11h9M9 11l7-8M14 5v6'), sosnap: r(5, 5, 12, 13, 'fill="#eef"') + c(4, 4, 2, O), sotrack: p('M15 3L5 15h12'), sducs: p('M4 3v13h14M4 16l9-8M2 5l2-2 2 2') + p('M15 2l-4 5h3l-1 4 5-5h-3z', 'fill="#f0b030" stroke="#a07010"'), sdyn: p('M7 4v10M2 9h10', 'stroke-width="1.500"') + r(10, 11, 7, 4, 'fill="#fff"'), slwt: p('M10 3v13', 'stroke-width="1.500"') + p('M4 11h13', 'stroke-width="2.500"'), sqp: r(6, 4, 8, 12, 'fill="#fff" stroke-width="1.500"') + p('M8 7h4M8 10h4M8 13h4'),
  slayout: r(4, 2, 12, 12, 'fill="#ddd"') + p('M7 11V5l5 6z') + p('M3 17h14', 'stroke-width="2"'), squick: r(2, 4, 7, 7, 'fill="#ddd"') + r(10, 4, 7, 7, 'fill="#ddd"') + p('M3 15h14', 'stroke-width="2"'), swheel: c(10, 10, 7.5, 'fill="#ddd"') + c(10, 10, 3) + p('M4 4l4 4M16 4l-4 4M4 16l4-4M16 16l-4-4', 'stroke="#666"'), smotion: r(3, 8, 13, 10, 'fill="#ddd"') + p('M8 10l5 3-5 3z', 'fill="#333"') + r(2, 2, 4, 4) + r(8, 2, 4, 4) + r(14, 2, 4, 4),
  sannov: anno + c(15, 12, 3, 'fill="#f0c040" stroke="#c08020"'), sannoa: `<g opacity=".5">${anno}</g>`, slock: r(3, 9, 11, 9, 'fill="#eee"') + p('M10 9V4q4-4 7 0v4')
};
const svg = n => `<svg class="ico" viewBox="0 0 20 20">${icons[n] || ''}</svg>`;
document.querySelectorAll('[data-tools]').forEach(el => {
  el.innerHTML = el.dataset.tools.split(' ').map(n => n === '|' ? '<i class="sep"></i>' : n === 'v' ? '<button class="ar" aria-label="列表"><i class="tri dim"></i></button>' : `<button aria-label="${n}">${svg(n)}</button>`).join('');
});
document.querySelectorAll('[data-icon]').forEach(el => { el.innerHTML = svg(el.dataset.icon); });
document.querySelector('.wsicon').innerHTML = svg('gear');

// ---- drawing; both sheets use three units to the pixel ----
const red = '#c8102c', pink = '#dd6a7c', gray = '#8c8c8c', pur = '#5a1c86', wht = '#e8e0e4', cy = '#4fb8b0', mag = '#d818e0';
const R = (x, y, w, h, f) => `<rect x="${x}" y="${y}" width="${w}" height="${h}" fill="${f}"/>`;
const B = (x, y, x2, y2, s, w = 3) => `<path d="M${x} ${y}H${x2}V${y2}H${x}z" fill="none" stroke="${s}" stroke-width="${w}"/>`;
const L = (d, s, w = 3, a = '') => `<path d="${d}" fill="none" stroke="${s}" stroke-width="${w}" ${a}/>`;
let seed = 7; const rnd = () => (seed = (seed * 16807) % 2147483647) / 2147483647;

let a = '';
[[163, 103, 365, 271], [391, 103, 614, 256], [391, 268, 459, 356], [391, 364, 614, 577], [391, 589, 614, 742], [52, 430, 391, 742], [661, 103, 1523, 742]].forEach(b => a += B(...b, pur, 4));
[[114, 12], [126, 40], [180, 9], [200, 9], [216, 14], [238, 14]].forEach(([y, h], i) => { a += R(177, y, 58, h, gray); if (i != 2 && i != 3 && i != 5) a += R(177, y + 3, 62, 3, cy); });
a += L('M177 132h60M177 142h60M177 152h60M177 222h60', cy, 5);
[112, 126, 144, 158, 172, 182, 197, 218, 232, 250].forEach((y, i) => a += R(261, y, 60, i % 3 ? 8 : 5, i % 2 ? gray : cy) + R(261, y + 7, 58, 3, i % 3 ? cy : gray));
// detail sheets
a += R(390, 69, 35, 5, pink) + R(390, 78, 80, 5, pink) + R(390, 84, 120, 5, pink) + R(390, 90, 46, 5, pink);
a += R(396, 109, 45, 53, '#f2ecee') + L('M402 116h12M402 124h10M402 134h18M402 144h14M424 120v34M432 128v24', '#a04060', 3, 'stroke-dasharray="6 4"');
a += L('M470 108v22M492 108v22M460 130l14-10M484 120l12 10M456 146h36M456 158h36M456 168h36', '#b08088') + L('M472 138v32M480 138v30', red, 5) + L('M506 138l12 8h14M540 146h10l8-8M506 168l12-8h14M540 160h18M536 134v34', gray);
a += L('M571 150v14h10v-12', wht) + L('M398 184h44v26h-38zM398 216q20 20 40 4M400 236h30', gray, 4) + R(408, 192, 16, 12, pink) + R(443, 184, 6, 26, '#eee') + L('M474 180v28M486 180v24', pink, 5) + L('M444 222v12h8M456 222v12h8M468 222v12h8', pink);
a += L('M490 216v32M500 218v30M510 216v32M520 218v30M530 216v32', pink, 4) + L('M536 218h20M546 218v28M538 246h18', gray) + L('M590 218h-20v26', '#7fd860', 5) + L('M582 226h24M580 240h26M590 232l14 16M584 248l16-20', red, 5) + L('M636 214v34M631 218h8', pink, 4);
[[273, 4], [320, 3]].forEach(([y, n]) => { for (let j = 0; j < n; j++) for (let i = 0; i < 6 - j * 2 || i < 1; i++) a += R(393 + i * 11, y + j * 10, 9, i < 2 ? 9 : 6, pink); });
[[401, 370], [514, 370], [401, 448], [514, 448]].forEach(([x, y]) => a += B(x, y, x + 84, y + 62, red) + L(`M${x} ${y + 66}H${x + 90}V${y + 3}M${x} ${y + 4}v62`, '#b09094', 4, 'stroke-dasharray="12 2"') + R(x + 48, y + 4, 14, 52, '#b00c40') + L(`M${x + 38} ${y + 14}h34v8h-34zM${x + 38} ${y + 40}h34v8h-34z`, '#d87888') + R(x + 52, y + 14, 7, 7, mag) + R(x + 52, y + 40, 7, 7, mag));
a += L('M403 570v-42h84M516 574v-46h84', red, 5) + L('M403 570v-42h84', pink, 4, 'stroke-dasharray="6 5"') + L('M520 528h80', pink, 4, 'stroke-dasharray="6 5"');
a += L('M414 602v52h180', gray) + R(420, 600, 78, 10, gray) + L('M446 610l10 10v30M476 610l-12 10v30', gray, 5) + L('M460 616v36', wht, 4) + R(514, 628, 82, 10, gray) + L('M524 640l24 12h30M530 654h62', gray, 4) + L('M420 656h176', '#d8d0a0');
a += R(420, 694, 176, 28, '#777'); for (let i = 0; i < 70; i++) a += R(420 + rnd() * 172, 694 + rnd() * 24, 4, 3, '#222');
a += L('M96 462h120M210 462v80M216 516h150M360 530v154M96 684h156', gray, 12) + `<circle cx="132" cy="474" r="8" fill="none" stroke="#999" stroke-width="4"/><circle cx="183" cy="474" r="8" fill="none" stroke="#999" stroke-width="4"/>` + R(288, 536, 45, 7, gray) + R(302, 522, 18, 14, gray);
a += L('M151 552v70M145 632l6-10 6 10M140 678v-40l6-6h12l6 6v40z', gray, 4) + R(272, 568, 32, 54, '#808080') + L('M264 574v46M310 574v50M242 624h26M242 610v14M296 624h20', gray, 6) + L('M280 578v10M294 578v10M280 596h18M280 608h18', '#111', 4);
// assembly frame, left column
const bolt = (x, y) => R(x - 9, y - 14, 18, 28, '#9c1030') + R(x - 13, y - 7, 26, 14, red) + L(`M${x - 7} ${y}h14M${x} ${y - 9}v18`, '#d838b0', 4) + R(x - 2, y - 2, 4, 4, '#eee');
a += L('M688 130v-10h108v10M690 130h-11v110h40', gray) + L('M694 286v-9h162v9M692 290h-9v104h36', gray) + L('M686 430h80v10M764 440h14v80h-14', gray);
a += R(690, 130, 108, 8, red) + R(694, 287, 162, 7, red); [713, 772].forEach(x => a += L(`M${x} 132v110`, red, 8) + L(`M${x} 138v100`, '#f4a0a0') + B(x - 2, 206, x + 10, 238, red, 4)); [718, 778, 832].forEach(x => a += L(`M${x} 290v108`, red, 8) + L(`M${x} 294v100`, '#f4a0a0') + B(x - 6, 362, x + 4, 394, red, 4));
a += R(690, 438, 70, 8, red) + L('M716 446l-12 14v90', red, 6) + L('M716 446l-12 14v90', '#f0a0a0') + L('M762 450l-3 50', red, 11) + L('M757 498l-17 16v36', red, 6) + L('M754 500l-14 14v36', '#f0a0a0');
a += `<circle cx="708" cy="647" r="13" fill="#208020" stroke="#70f060" stroke-width="5"/>` + L('M702 640v12M708 638v18M714 640v12', '#b0ff90') + R(767, 608, 10, 26, gray) + L('M772 634v26M760 664h26', gray, 4) + L('M838 574v72M832 654l6-10 6 10M827 698v-40h24v40z', gray, 4);
// plan views
a += B(922, 134, 1112, 238, red); [[949, 160], [1084, 160], [949, 220], [1084, 220]].forEach(q => a += bolt(...q));
a += L('M914 160h200M914 220h200M949 128v118M1084 128v118', '#c4b8bc') + B(922, 412, 1138, 574, red); [955, 1030, 1105].forEach(x => a += bolt(x, 446) + bolt(x, 556));
a += L('M914 446h236M914 556h236M955 404v176M1030 404v176M1105 404v176', '#c4b8bc');
a += L('M922 341h190', red, 8); [949, 1084].forEach(x => a += R(x - 4, 278, 8, 60, gray) + L(`M${x - 12} 342h24M${x} 334v26`, pink, 5) + R(x - 5, 346, 10, 10, mag));
a += L('M922 691h218', red, 8); [955, 1030, 1105].forEach(x => a += R(x - 6, 616, 12, 74, gray) + L(`M${x - 20} 692h40`, gray, 5) + L(`M${x} 696v24`, red, 11) + R(x - 8, 700, 16, 8, red));
a += B(1205, 134, 1210, 238, red, 4) + R(1144, 154, 62, 9, gray) + R(1144, 216, 62, 8, gray) + R(1206, 152, 16, 12, mag) + R(1208, 214, 14, 12, mag);
a += B(1250, 412, 1255, 574, red, 4) + L('M1174 446h106', gray, 7) + R(1176, 549, 76, 11, gray) + L('M1252 446h26M1252 556h26', red, 13);
a += R(1178, 310, 54, 6, mag) + R(1178, 326, 54, 6, mag) + R(1166, 348, 80, 7, mag) + R(1176, 306, 8, 28, mag) + R(1226, 306, 8, 28, mag) + R(1164, 344, 12, 14, mag) + R(1234, 344, 12, 14, mag) + L('M1184 312h44M1184 328h44M1178 351h56', '#f8a0f8');
a += L('M1312 184h56', '#60f050', 4) + L('M1312 196h56', '#ddd') + R(1332, 184, 14, 18, '#60d050') + L('M1326 232v-24h26', red, 7) + L('M1402 184h90', '#60f050', 4) + L('M1402 196h90', '#ddd') + L('M1402 208h90M1402 232h92', red) + B(1434, 186, 1458, 206, '#9080a0', 4) + R(1440, 190, 12, 14, '#80a080');
[352, 388].forEach(y => { a += L(`M1360 ${y - 8}v18M1360 ${y - 8}h14v16h-14`, gray) + R(1376, y - 7, 78, 14, '#181c60'); for (let x = 1378; x < 1450; x += 7) a += L(`M${x} ${y + 7}l7 -14`, '#5058c8', 3); });
a += B(1318, 536, 1346, 550, red) + L('M1331 532v80', pink, 5) + R(1324, 604, 16, 12, red) + B(1258, 638, 1448, 649, red, 4); [1277, 1354, 1430].forEach(x => a += L(`M${x} 632v80`, red, 6) + L(`M${x} 638v60`, '#e88890') + R(x - 9, 706, 18, 10, red));
a += R(1458, 588, 6, 6, '#801020');
a += `<text x="795" y="74" fill="${pink}" font-family="Liberation Mono, Noto Sans CJK SC, monospace" font-size="22" font-weight="700">LTSCALE:<tspan font-size="28">图比例是</tspan>1:1<tspan font-size="28">时为</tspan>10,<tspan font-size="28">依此类推</tspan></text>`;

// fastener library sheet
let b = B(331, 76, 1093, 682, pur, 5) + B(335, 80, 1089, 677, pink);
b += R(335, 80, 754, 5, pink) + R(335, 251, 754, 13, pink);
const wedge = (x, y, x2, y2, n, lo, cols, w, cap) => {
  let s = L(`M${x} ${y}H${x2}M${x2} ${y}V${y2}`, pink), st = (x2 - x - 6) / n;
  for (let i = 0; i < n; i++) {
    const bx = x + 5 + i * st, h = (y2 - y - 10) * (lo + (1 - lo) * i / n), f = cols[i % cols.length];
    s += R(bx, y + 6, w, h, f);
    if (cap) s += R(bx - 2, y + 5, w + 2, 5, cap) + R(bx + 1, y + 10, 2, h * .5, i % 3 ? '#d0a0a8' : red);
  }
  return s + R(x + (x2 - x) * .4, y2 - 5, (x2 - x) * .2, 5, pink);
};
[[335, 415, 1], [415, 496, 0], [496, 576, 0], [576, 657, 1], [657, 737, 0], [755, 836, 1]].forEach(([x, x2, k]) => [84, 125, 166, 210].forEach((y, j) => {
  const on = k && !(x == 755 && j % 2);
  b += wedge(x, y, x2, y + 41, on ? 13 : 12, .15, on ? ['#d80a18'] : ['#808080', '#707070'], on ? 5 : 3) + R(x, y, 62, 5, pink) + R(x + 20, y + 3, 28, 5, pink);
}));
[84, 125, 166, 210].forEach(y => b += B(737, y, 755, y + 41, pink) + L(`M740 ${y + 22}h12M746 ${y + 16}v12`, pink));
b += L('M850 84v166M917 84v166M950 84v166M1005 84v166M1055 84v166M836 140h14M836 200h14', pink);
[862, 883, 904].forEach(x => b += L(`M${x} 92v70`, '#a08060', 4) + L(`M${x} 106v18M${x} 138v18`, '#f8e870', 8) + R(x - 3, 122, 6, 16, gray));
b += L('M850 162l30 8 36 14M866 190v40', pink, 6) + L('M885 206v34', '#f8e870', 7) + L('M854 236l20 14h40', pink, 8) + L('M866 190v26', red, 6);
[98, 150, 200].forEach(y => b += R(929, y, 5, 34, gray) + R(923, y + 36, 18, 5, pink) + R(928, y + 42, 7, 7, red));
b += R(972, 92, 10, 110, red) + L('M977 96v110', '#f09090', 4) + R(960, 112, 34, 18, red) + R(966, 88, 22, 14, red) + L('M953 214h48M960 207h34', pink, 6) + L('M977 220v22M966 244h24', pink);
b += R(1018, 90, 24, 7, pink) + L('M1030 98v80', pink, 5) + R(1022, 140, 16, 30, gray) + L('M1018 128h24M1018 180h24M1014 240h34', pink, 4) + R(1022, 190, 16, 18, red) + R(1020, 228, 20, 12, red);
[96, 130, 164, 204].forEach(y => b += R(1062, y, 20, 12, red) + R(1060, y + 14, 24, 4, pink) + L(`M1055 ${y + 22}h34`, pink));
const mix = [gray, '#a03848', '#909090', '#c01830'], cap = '#b82840';
[[266, 303], [303, 354], [354, 414], [414, 488], [488, 574], [574, 676]].forEach(([y, y2], i) => b += i == 1 ? L(`M335 ${y}H410`, pink) + wedge(410, y, 565, y2, 12, .6, mix, 5, cap) : wedge(335, y, 565, y2, 18, i == 0 ? .8 : .38, mix, 6, cap));
[[266, 300], [300, 340], [340, 384], [384, 445], [445, 515], [515, 590], [590, 676]].forEach(([y, y2]) => b += wedge(586, y, 756, y2, 18, .4, mix, 5, cap));
[[266, 307], [307, 352], [352, 405], [405, 462], [462, 527], [527, 590], [590, 650]].forEach(([y, y2]) => b += wedge(778, y, 946, y2, 14, .6, [gray, '#8c7074'], 5, cap));
b += R(612, 668, 122, 8, pink) + R(832, 668, 68, 8, pink) + L('M586 264v412M775 264v412M967 264v412M988 264v412M1033 264v412M1060 264v412', pink);
[[565, [266, 303, 354, 414, 488, 574]], [756, [266, 300, 340, 384, 445, 515, 590]], [946, [266, 307, 352, 405, 462, 527, 590]]].forEach(([x, ys]) => ys.forEach(y => b += B(x, y, x + 20, y + 22, pink, 2) + L(`M${x + 4} ${y + 10}h12M${x + 10} ${y + 4}v12`, '#e8a0a8')));
for (let y = 266, i = 0; y < 660; y += 28, i++) {
  b += L(`M${i % 2 ? 1033 : 967} ${y}H1089`, pink, 2) + R(1000, y + 6, 20, i % 2 ? 12 : 5, pink) + R(1006, y + 8, 8, 16, red);
  [1046, 1074].forEach(x => b += i % 2 ? R(x - 8, y + 8, 17, 11, red) + R(x - 9, y + 20, 20, 3, pink) : L(`M${x - 8} ${y + 14}h17M${x} ${y + 6}v16`, pink, 4));
  b += i % 2 ? R(972, y, 10, 26, '#b83048') : L(`M978 ${y + 4}v22`, gray, 6);
}
for (let x = 784; x < 832; x += 12) b += R(x, 640, 5, 26, gray);
b += L('M937 42v34M933 48l4-6 4 6', '#a01024', 4) + L('M254 160h50M262 168h36M268 148h18M270 178h28M278 150v28', '#b01028', 4) + R(262, 171, 36, 4, pink);
// revision cloud: arcs that bulge towards the inside
const arcs = (pts, dx, dy) => pts.map(([x, y], i) => i ? `Q${(x + pts[i - 1][0]) / 2 + dx} ${(y + pts[i - 1][1]) / 2 + dy} ${x} ${y}` : `M${x} ${y}`).join('');
b += L(arcs([[97, 196], [80, 245], [78, 305], [78, 365], [80, 425], [82, 487], [86, 547], [88, 607], [97, 662]], 32, 0) +
  arcs([[97, 196], [203, 190], [272, 185]], 0, 42) + arcs([[272, 185], [307, 230], [315, 278], [312, 335], [317, 395], [316, 455], [316, 510], [317, 570], [312, 635], [298, 662]], -30, 0) +
  arcs([[97, 662], [145, 658], [190, 656], [245, 660], [298, 662]], 0, -14), '#dede70');
b += `<g fill="#f2f23a" font-family="Liberation Sans, sans-serif" font-size="14" font-weight="700"><text x="138" y="234">Do you have bolts</text><text x="142" y="250">in these length ?</text></g>` + R(158, 258, 74, 5, '#a03030');
[[266, 108, 9, 22], [320, 128, 8, 24], [377, 150, 7, 28], [435, 160, 6, 26], [492, 220, 3, 30], [548, 210, 4, 36], [608, 248, 2, 44]].forEach(([y, x, n, h]) => {
  const st = n > 2 ? (264 - x) / (n - 1) : 22;
  for (let i = 0; i < n; i++) b += R(x + i * st, y, 5, h, i % 2 ? gray : '#a85058') + R(x + i * st - 2, y + 4, 9, 4, '#b02038');
  b += R(x + (264 - x) / 2 - 9, y + h + 4, 22, 4, pink);
});
b += R(338, 628, 9, 28, red) + B(352, 603, 371, 623, '#eee');

document.getElementById('drawing').innerHTML =
  `<g transform="translate(0 -102)" shape-rendering="crispEdges"><g transform="translate(270 360) scale(.3333)">${a}</g><g transform="translate(770 380) scale(.3333)">${b}</g></g>` +
  '<path d="M890.500 0v2000M0 482.500h3000" stroke="#fff"/><path d="M0 741.500h59M59 734.500v14l19-7zM59 738l19 3.500L59 745M91 732l16 19M107 732l-16 19" fill="none" stroke="#ddd"/>';
```
